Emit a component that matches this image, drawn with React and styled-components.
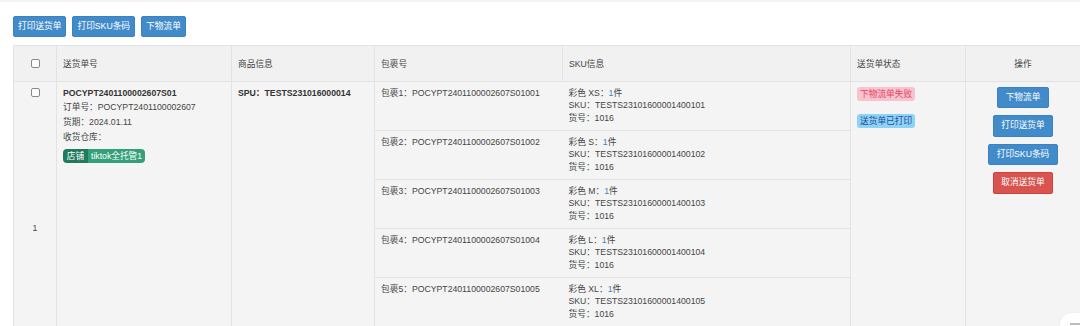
import React from "react";
import styled, { createGlobalStyle } from "styled-components";

const Global = createGlobalStyle`
  html, body { margin: 0; padding: 0; background: #fff; }
  body {
    font-family: "Liberation Sans", "Noto Sans CJK SC", sans-serif;
    font-size: 8.7px;
    color: #333;
  }
`;

const Page = styled.div`
  display: flex;
  flex-direction: column;
`;

const TopStrip = styled.div`
  height: 2px;
  background: #f3f3f3;
`;

const Toolbar = styled.div`
  display: flex;
  gap: 6px;
  padding: 13.5px 0 7.5px 13px;
`;

const Btn = styled.button`
  display: inline-block;
  height: 21.5px;
  padding: 0 ${(p) => (p.$wide ? "7.5px" : "4px")};
  font-family: inherit;
  font-size: 8.7px;
  line-height: 19px;
  color: #fff;
  white-space: nowrap;
  background: ${(p) => (p.$danger ? "#d9534f" : "#428bca")};
  border: 1px solid ${(p) => (p.$danger ? "#d43f3a" : "#3b82c0")};
  border-radius: 2px;
  cursor: pointer;
`;

const TableWrap = styled.div`
  padding-left: 13px;
`;

const Table = styled.table`
  width: 1067px;
  table-layout: fixed;
  border-collapse: collapse;
  border-spacing: 0;
`;

const Th = styled.th`
  height: 35px;
  padding: 0 6px;
  background: #f1f1f1;
  border: 1px solid #e3e3e3;
  font-weight: normal;
  color: #444;
  text-align: ${(p) => (p.$center ? "center" : "left")};
  vertical-align: middle;
`;

const Td = styled.td`
  background: #f4f4f4;
  border: 1px solid #e3e3e3;
  padding: ${(p) => p.$pad || "4px 6px"};
  vertical-align: ${(p) => (p.$middle ? "middle" : "top")};
  text-align: ${(p) => (p.$center ? "center" : "left")};
  line-height: ${(p) => p.$lh || "14.7px"};
  color: #444;
`;

const IndexTd = styled(Td)`
  position: relative;
`;

const SubTd = styled(Td)`
  padding: 5px 6px 5.5px;
  line-height: 12.5px;
  ${(p) => (p.$noRight ? "border-right-style: hidden;" : "")}
`;

const Check = styled.input.attrs({ type: "checkbox" })`
  appearance: none;
  display: block;
  margin: 0 auto;
  width: 9px;
  height: 9px;
  border: 1px solid #8a8a8a;
  border-radius: 2px;
  background: #fff;
`;

const RowCheck = styled(Check)`
  position: absolute;
  top: 6px;
  left: 50%;
  margin: 0 0 0 -4.5px;
`;

const Bold = styled.div`
  font-weight: bold;
  color: #333;
`;

const Line = styled.div``;

const Tag = styled.span`
  display: inline-flex;
  margin-top: 4.5px;
  height: 14px;
  border-radius: 4px;
  overflow: hidden;
  line-height: 14px;
  color: #fff;
`;

const TagPart = styled.span`
  padding: 0 ${(p) => (p.$dark ? "3.8px" : "3px")};
  background: ${(p) => (p.$dark ? "#217a5c" : "#34a07a")};
`;

const Num = styled.span`
  color: #3b86c8;
`;

const Status = styled.div`
  display: inline-block;
  height: 14px;
  line-height: 14px;
  padding: 0 3px;
  border-radius: 3px;
  background: ${(p) => (p.$ok ? "#8dd3f6" : "#f8c3cf")};
  color: ${(p) => (p.$ok ? "#1d4b9b" : "#e2455d")};
  margin-bottom: 13.5px;
`;

const StatusStack = styled.div`
  display: flex;
  flex-direction: column;
  align-items: flex-start;
`;

const ActionStack = styled.div`
  display: flex;
  flex-direction: column;
  align-items: center;
  gap: 7px;
`;

const Floating = styled.div`
  position: fixed;
  left: 1060px;
  top: 313px;
  width: 44px;
  height: 30px;
  background: #fff;
  border-radius: 12px;
  box-shadow: 0 0 3px rgba(0, 0, 0, 0.05);
  &::after {
    content: "";
    position: absolute;
    left: 10px;
    top: 10px;
    width: 10px;
    height: 2px;
    background: #bdbdbd;
  }
`;

const packages = [
  { n: 1, size: "XS" },
  { n: 2, size: "S" },
  { n: 3, size: "M" },
  { n: 4, size: "L" },
  { n: 5, size: "XL" },
  { n: 6, size: "XXL" },
];

const pkgCells = (p) => [
  <SubTd key="a" $noRight>
    包裹{p.n}：POCYPT2401100002607S0100{p.n}
  </SubTd>,
  <SubTd key="b">
    <Line>
      彩色 {p.size}：<Num>1</Num>件
    </Line>
    <Line>SKU：TESTS2310160000140010{p.n}</Line>
    <Line>货号：1016</Line>
  </SubTd>,
];

export default function App() {
  const span = packages.length;
  return (
    <Page>
      <Global />
      <TopStrip />
      <Toolbar>
        <Btn>打印送货单</Btn>
        <Btn>打印SKU条码</Btn>
        <Btn>下物流单</Btn>
      </Toolbar>
      <TableWrap>
        <Table>
          <colgroup>
            <col style={{ width: 43 }} />
            <col style={{ width: 175 }} />
            <col style={{ width: 143 }} />
            <col style={{ width: 188 }} />
            <col style={{ width: 288 }} />
            <col style={{ width: 115 }} />
            <col style={{ width: 115 }} />
          </colgroup>
          <thead>
            <tr>
              <Th $center>
                <Check />
              </Th>
              <Th>送货单号</Th>
              <Th>商品信息</Th>
              <Th>包裹号</Th>
              <Th>SKU信息</Th>
              <Th>送货单状态</Th>
              <Th $center>操作</Th>
            </tr>
          </thead>
          <tbody>
            <tr>
              <IndexTd rowSpan={span} $middle $center $pad="0">
                <RowCheck />
                1
              </IndexTd>
              <Td rowSpan={span}>
                <Bold>POCYPT2401100002607S01</Bold>
                <Line>订单号：POCYPT2401100002607</Line>
                <Line>货期：2024.01.11</Line>
                <Line>收货仓库：</Line>
                <Tag>
                  <TagPart $dark>店铺</TagPart>
                  <TagPart>tiktok全托管1</TagPart>
                </Tag>
              </Td>
              <Td rowSpan={span}>
                <Bold>SPU：TESTS231016000014</Bold>
              </Td>
              {pkgCells(packages[0])}
              <Td rowSpan={span} $pad="5px 6px">
                <StatusStack>
                  <Status>下物流单失败</Status>
                  <Status $ok>送货单已打印</Status>
                </StatusStack>
              </Td>
              <Td rowSpan={span} $pad="5px 6px" $center>
                <ActionStack>
                  <Btn $wide>下物流单</Btn>
                  <Btn $wide>打印送货单</Btn>
                  <Btn $wide>打印SKU条码</Btn>
                  <Btn $wide $danger>取消送货单</Btn>
                </ActionStack>
              </Td>
            </tr>
            {packages.slice(1).map((p) => (
              <tr key={p.n}>{pkgCells(p)}</tr>
            ))}
          </tbody>
        </Table>
      </TableWrap>
      <Floating />
    </Page>
  );
}
